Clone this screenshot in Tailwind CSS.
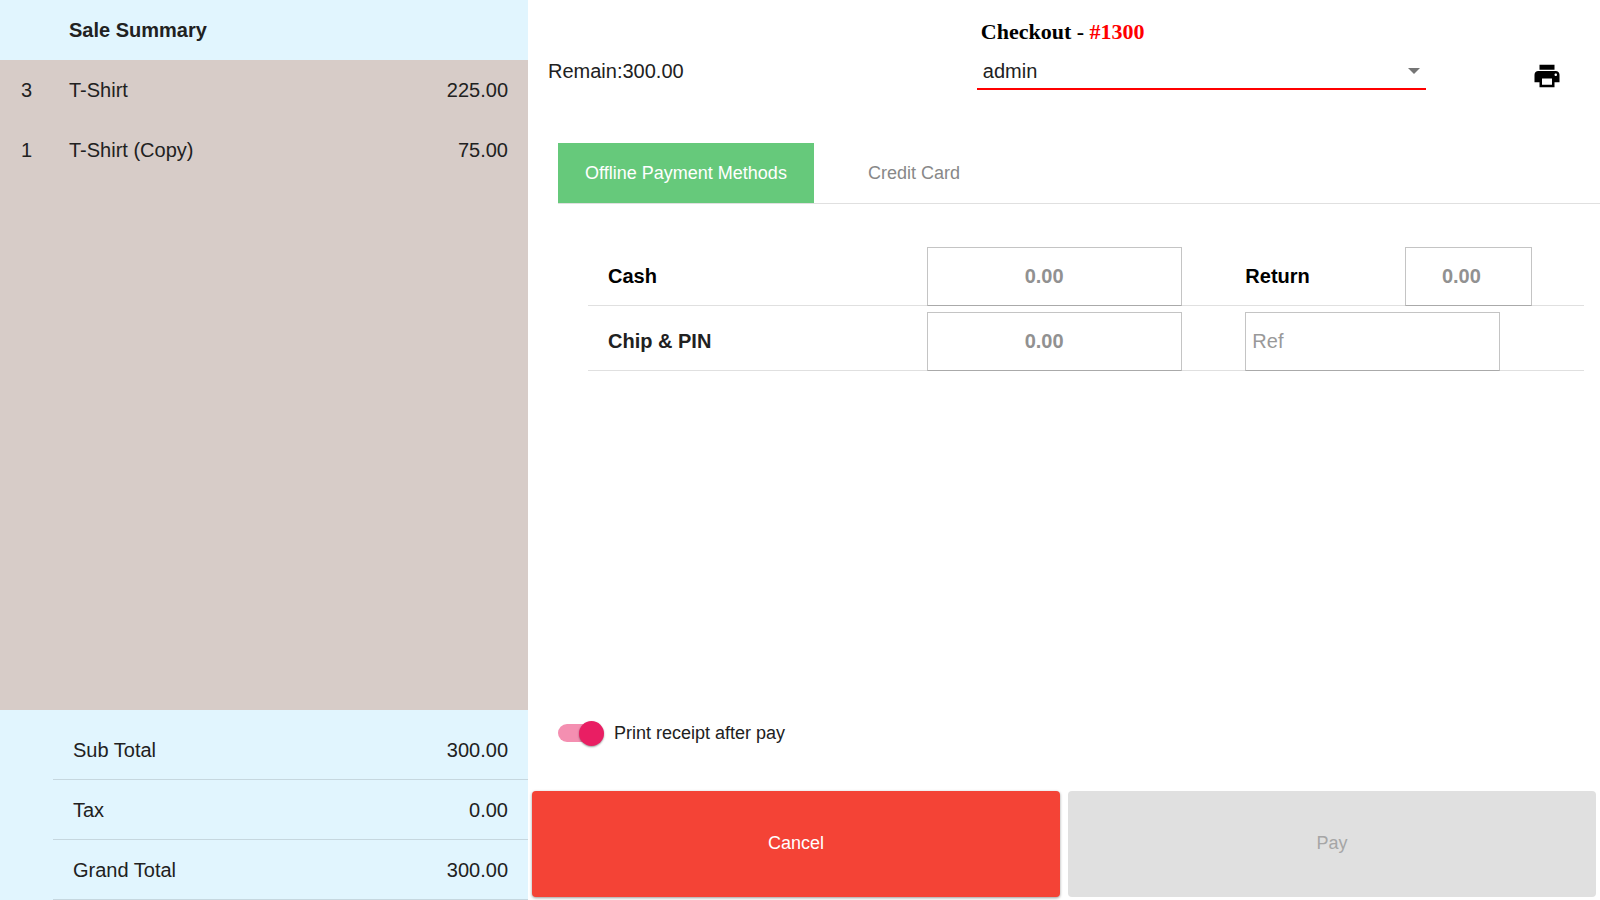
<!DOCTYPE html>
<html lang="en">
<head>
    <meta charset="UTF-8">
    <meta name="viewport" content="width=device-width, initial-scale=1.0">
    <title>Checkout - #1300</title>
    <script src="https://cdn.jsdelivr.net/npm/@tailwindcss/browser@4"></script>
</head>
<body class="bg-white font-['Liberation_Sans',Arial,sans-serif] text-xl text-[#212121]">
    <div class="flex min-h-screen">

        <!-- Sale summary -->
        <aside class="flex w-[33%] flex-col bg-[#d7ccc8]">
            <h2 class="flex h-15 items-center bg-[#e1f5fe] pl-[69px] font-bold">Sale Summary</h2>
            <table class="w-full">
                <tbody>
                    <tr class="h-15">
                        <td class="w-[69px] pl-[21px]">3</td>
                        <td>T-Shirt</td>
                        <td class="pr-5 text-right">225.00</td>
                    </tr>
                    <tr class="h-15">
                        <td class="w-[69px] pl-[21px]">1</td>
                        <td>T-Shirt (Copy)</td>
                        <td class="pr-5 text-right">75.00</td>
                    </tr>
                </tbody>
            </table>
            <dl class="mt-auto bg-[#e1f5fe] pt-2.5 pl-[53px]">
                <div class="flex h-15 items-center justify-between border-b border-[#c6d7df] px-5">
                    <dt>Sub Total</dt>
                    <dd>300.00</dd>
                </div>
                <div class="flex h-15 items-center justify-between border-b border-[#c6d7df] px-5">
                    <dt>Tax</dt>
                    <dd>0.00</dd>
                </div>
                <div class="flex h-15 items-center justify-between border-b border-[#c6d7df] px-5">
                    <dt>Grand Total</dt>
                    <dd>300.00</dd>
                </div>
            </dl>
        </aside>

        <main class="flex flex-1 flex-col">
            <header class="flex h-[143px] items-start">
                <div class="w-[40%] pt-[57px] pl-5">Remain:300.00</div>
                <div class="w-[46%] pt-4 pr-6 pl-5">
                    <h1 class="pl-1 font-['Liberation_Serif','Times_New_Roman',serif] text-[22px] leading-8 font-bold text-black">Checkout - <span class="text-[#ff0000]">#1300</span></h1>
                    <div class="relative">
                        <select aria-label="Cashier" class="h-[42px] w-full appearance-none border-b-2 border-[#ff0000] bg-transparent px-1.5 pt-1.5 outline-none">
                            <option>admin</option>
                        </select>
                        <svg class="pointer-events-none absolute top-5 right-1.5 h-1.5 w-3 fill-[#757575]" viewBox="0 0 12 6"><path d="M0 0h12L6 6z"/></svg>
                    </div>
                </div>
                <div class="flex flex-1 justify-end pt-[61px] pr-[38px]">
                    <button type="button" aria-label="Print">
                        <svg class="size-[30px] fill-black" viewBox="0 0 24 24"><path d="M19 8H5c-1.66 0-3 1.34-3 3v6h4v4h12v-4h4v-6c0-1.66-1.34-3-3-3zm-3 11H8v-5h8v5zm3-7c-.55 0-1-.45-1-1s.45-1 1-1 1 .45 1 1-.45 1-1 1zm-1-9H6v4h12V3z"/></svg>
                    </button>
                </div>
            </header>

            <!-- Payment methods -->
            <nav class="ml-[30px] flex border-b border-[#e0e0e0] text-lg">
                <button type="button" class="h-15 w-64 bg-[#66c97b] text-white">Offline Payment Methods</button>
                <button type="button" class="h-15 w-50 text-[#888888]">Credit Card</button>
            </nav>
            <section class="mt-[37px] mr-4 ml-[60px]">
                <div class="grid grid-cols-3 items-center border-b border-[#e0e0e0] px-5 pt-1.5">
                    <label for="cash" class="font-bold text-black">Cash</label>
                    <input id="cash" type="text" placeholder="0.00" class="-mb-px h-[59px] w-4/5 border border-b-[#aaaaaa] border-[#c4c4c4] pr-5 text-center font-bold placeholder:text-[#919191]">
                    <div class="grid grid-cols-2 items-center">
                        <label for="return" class="font-bold text-black">Return</label>
                        <input id="return" type="text" placeholder="0.00" class="-mb-px h-[59px] w-4/5 border border-b-[#aaaaaa] border-[#c4c4c4] pr-3.5 text-center font-bold placeholder:text-[#919191]">
                    </div>
                </div>
                <div class="grid grid-cols-3 items-center border-b border-[#e0e0e0] px-5 pt-1.5">
                    <label for="chip" class="font-bold">Chip &amp; PIN</label>
                    <input id="chip" type="text" placeholder="0.00" class="-mb-px h-[59px] w-4/5 border border-b-[#aaaaaa] border-[#c4c4c4] pr-5 text-center font-bold placeholder:text-[#919191]">
                    <input type="text" aria-label="Reference" placeholder="Ref" class="-mb-px h-[59px] w-4/5 border border-b-[#aaaaaa] border-[#c4c4c4] px-1.5 placeholder:text-[#999999]">
                </div>
            </section>

            <label class="mt-auto mb-[45px] ml-[30px] flex items-center gap-2.5 self-start text-lg leading-[26px]">
                <span class="relative flex h-[26px] w-[46px] items-center">
                    <input type="checkbox" checked class="h-[18px] w-11 appearance-none rounded-full bg-[#f48fb1]">
                    <span class="pointer-events-none absolute right-0 size-[25px] rounded-full bg-[#e91e63] shadow-[0_1px_2px_rgba(0,0,0,0.4)]"></span>
                </span>
                Print receipt after pay
            </label>

            <footer class="grid grid-cols-2 gap-2 px-1 pb-[3px] text-lg">
                <button type="button" class="h-[106px] rounded-sm bg-[#f44336] pb-0.5 text-white shadow-[0_1px_3px_rgba(0,0,0,0.4)]">Cancel</button>
                <button type="button" disabled class="h-[106px] rounded-sm bg-[#e0e0e0] pb-0.5 text-[#a6a6a6]">Pay</button>
            </footer>
        </main>
    </div>
</body>
</html>
